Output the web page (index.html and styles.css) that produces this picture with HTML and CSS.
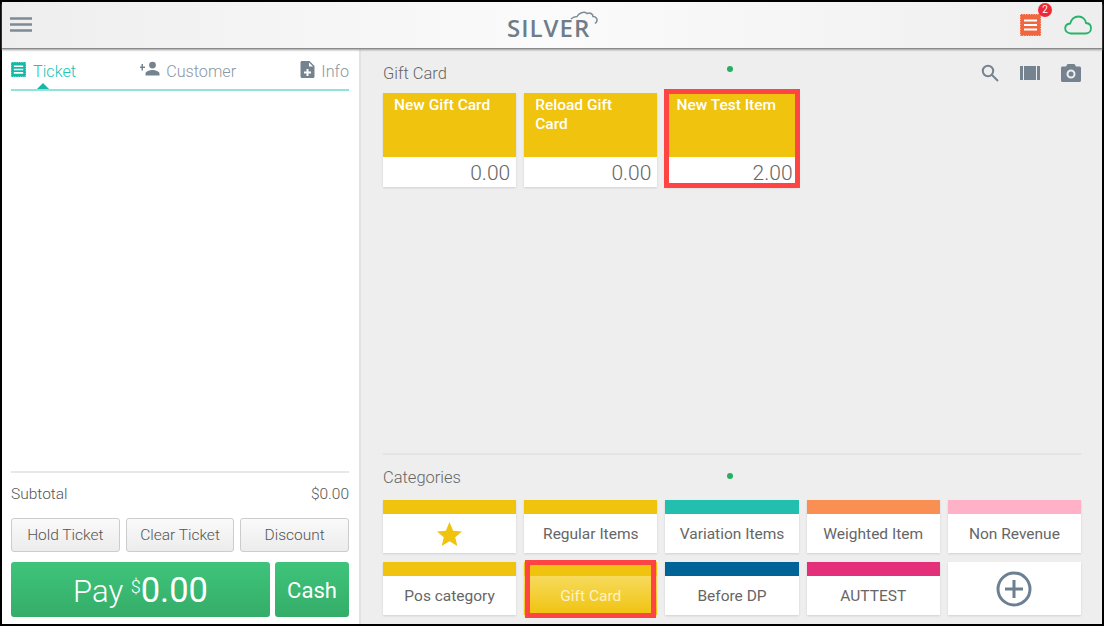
FILE: index.html
```html
<!DOCTYPE html>
<html lang="en">
<head>
    <meta charset="UTF-8">
    <title>Silver POS</title>
    <link rel="stylesheet" href="styles.css">
</head>
<body>
    <div class="screen">
        <header class="topbar">
            <svg class="menu-icon" viewBox="0 0 22 15"><path d="M0 1.500h22M0 7.500h22M0 13.500h22"/></svg>
            <div class="logo">
                <span class="logo-text">SILVER</span>
                <svg class="logo-cloud" viewBox="0 0 28 13"><path d="M1 8 C3 6 5 5.500 7 5.500 C9 2 14 0 17 2.500 C20 1 23 3 23 5.500 C26 5.500 28 8 26.500 11 L25 12.500"/></svg>
            </div>
            <div class="topbar-right">
                <div class="notify">
                    <svg class="ticket-icon" viewBox="0 0 21 22"><path class="orange" d="M0 0h21v22H0z"/><path class="serrate" d="M0 0h21v22H0z"/><path class="white-bar" d="M4 6.500h13M4 11h13M4 15.500h13"/></svg>
                    <span class="badge">2</span>
                </div>
                <svg class="cloud-icon" viewBox="0 0 28 20"><path d="M7 18.500 C3.500 18.500 1.200 16 1.200 13.500 C1.200 10.500 3.500 8.800 6.200 8.500 C7.500 4 11 1.500 14.500 1.500 C18.500 1.500 21.500 4.500 22 8 C25 8.300 27 10.500 27 13.200 C27 16 24.800 18.500 21.500 18.500 Z"/></svg>
            </div>
        </header>

        <div class="main">
            <aside class="ticket-panel">
                <nav class="tabs">
                    <div class="tab tab-active">
                        <svg class="tab-icon" viewBox="0 0 16 16"><path class="teal" d="M0 0h16v16H0z"/><path class="serrate" d="M0 0h16v16H0z"/><path class="white-thin" d="M3 4.500h10M3 8h10M3 11.500h10"/></svg>
                        <span>Ticket</span>
                    </div>
                    <div class="tab">
                        <svg class="tab-icon tab-icon-wide" viewBox="0 0 20 14"><path class="slate" d="M12.500 7a3.400 3.400 0 1 0 0-6.800 3.400 3.400 0 0 0 0 6.800zM12.500 8.600c-2.600 0-7 1.300-7 3.600V14h14v-1.800c0-2.300-4.400-3.600-7-3.600zM3 5V2.500H1.500V5H0v1.500h1.500V9H3V6.500h2V5z"/></svg>
                        <span>Customer</span>
                    </div>
                    <div class="tab">
                        <svg class="tab-icon" viewBox="0 0 14 17"><path class="slate" d="M1.500 0C.7 0 0 .7 0 1.500v14C0 16.300.7 17 1.500 17h11c.8 0 1.500-.7 1.500-1.500V5L9 0zM8.500 1.500 12.500 5.500H8.500zM6 8h2v2.500h2.500v2H8V15H6v-2.500H3.500v-2H6z" fill-rule="evenodd"/></svg>
                        <span>Info</span>
                    </div>
                </nav>
                <div class="ticket-lines"></div>
                <div class="subtotal">
                    <span>Subtotal</span>
                    <span>$0.00</span>
                </div>
                <div class="ticket-actions">
                    <button class="action-btn">Hold Ticket</button>
                    <button class="action-btn">Clear Ticket</button>
                    <button class="action-btn">Discount</button>
                </div>
                <div class="pay-row">
                    <button class="pay-btn">Pay <sup class="pay-currency">$</sup><span class="pay-amount">0.00</span></button>
                    <button class="cash-btn">Cash</button>
                </div>
            </aside>

            <section class="catalog">
                <div class="section-head">
                    <span class="section-title">Gift Card</span>
                    <span class="page-dot"></span>
                    <div class="tools">
                        <svg class="tool tool-search" viewBox="0 0 18 18"><circle cx="7" cy="7" r="5.200"/><path d="M11 11l6 6"/></svg>
                        <svg class="tool" viewBox="0 0 20 16"><path class="slate" d="M0 1h3v14H0zM4 1h12v14H4zM17 1h3v14h-3z"/></svg>
                        <svg class="tool" viewBox="0 0 20 18"><path class="slate" fill-rule="evenodd" d="M6.500 0h7L15 2.500h3.500c.8 0 1.500.7 1.500 1.500v12.500c0 .8-.7 1.500-1.500 1.500h-17C.7 18 0 17.300 0 16.500V4c0-.8.7-1.500 1.500-1.500H5zM10 5.500a4.500 4.500 0 1 0 0 9 4.500 4.500 0 0 0 0-9zM10 7.500a2.500 2.500 0 1 1 0 5 2.500 2.500 0 0 1 0-5z"/></svg>
                    </div>
                </div>
                <div class="tile-grid">
                    <div class="item-tile">
                        <div class="item-name">New Gift Card</div>
                        <div class="item-price">0.00</div>
                    </div>
                    <div class="item-tile">
                        <div class="item-name">Reload Gift Card</div>
                        <div class="item-price">0.00</div>
                    </div>
                    <div class="item-tile highlighted">
                        <div class="item-name">New Test Item</div>
                        <div class="item-price">2.00</div>
                    </div>
                </div>

                <div class="categories">
                    <div class="section-head section-head-cat">
                        <span class="section-title">Categories</span>
                        <span class="page-dot"></span>
                    </div>
                    <div class="cat-grid">
                        <div class="cat-tile yellow">
                            <div class="cat-label"><svg class="star" viewBox="0 0 24 23"><path d="M12 0l3.500 8.300 8.500.7-6.500 5.700 2 8.300-7.500-4.500L4.500 23l2-8.300L0 9l8.500-.7z"/></svg></div>
                        </div>
                        <div class="cat-tile yellow"><div class="cat-label">Regular Items</div></div>
                        <div class="cat-tile teal-band"><div class="cat-label">Variation Items</div></div>
                        <div class="cat-tile orange-band"><div class="cat-label">Weighted Item</div></div>
                        <div class="cat-tile pink"><div class="cat-label">Non Revenue</div></div>
                        <div class="cat-tile yellow"><div class="cat-label">Pos category</div></div>
                        <div class="cat-tile yellow cat-selected highlighted"><div class="cat-label">Gift Card</div></div>
                        <div class="cat-tile blue"><div class="cat-label">Before DP</div></div>
                        <div class="cat-tile magenta"><div class="cat-label">AUTTEST</div></div>
                        <div class="cat-tile cat-add">
                            <svg class="add-icon" viewBox="0 0 36 36"><circle cx="18" cy="18" r="16"/><path d="M18 9v18M9 18h18"/></svg>
                        </div>
                    </div>
                </div>
            </section>
        </div>
    </div>
</body>
</html>
```

FILE: styles.css
```css
* {
    box-sizing: border-box;
}
html, body {
    margin: 0;
    height: 100%;
    overflow: hidden;
}
body {
    font-family: Roboto, Arial, sans-serif;
    background: #000;
}
.screen {
    height: 626px;
    border: 2px solid #000;
    display: flex;
    flex-direction: column;
    background: #eee;
}

/* top bar */
.topbar {
    height: 46px;
    flex: none;
    display: flex;
    align-items: center;
    justify-content: space-between;
    padding: 0 10px 0 8px;
    position: relative;
    z-index: 2;
    background: linear-gradient(90deg, #eeeeee 0%, #fbfbfb 50%, #eeeeee 100%);
    box-shadow: 0 1px 0 #8a8a8a, 0 2px 2px #9a9a9a;
}
.menu-icon {
    width: 22px;
    height: 15px;
    margin-top: -2px;
}
.menu-icon path {
    stroke: #7d8a97;
    stroke-width: 2.500;
    fill: none;
}
.logo {
    position: absolute;
    left: 505px;
    top: 9px;
    width: 92px;
    height: 30px;
}
.logo-text {
    position: absolute;
    left: 0;
    top: 2px;
    font-family: "Open Sans", sans-serif;
    font-size: 24px;
    font-weight: 600;
    line-height: 30px;
    letter-spacing: 1px;
    color: #6f7d88;
}
.logo-cloud {
    position: absolute;
    left: 63px;
    top: 0;
    width: 28px;
    height: 13px;
}
.logo-cloud path {
    fill: none;
    stroke: #7d8a95;
    stroke-width: 1.500;
}
.topbar-right {
    display: flex;
    align-items: center;
    gap: 23px;
}
.notify {
    position: relative;
    width: 21px;
    height: 22px;
}
.ticket-icon {
    display: block;
    width: 21px;
    height: 22px;
}
.orange {
    fill: #f0663f;
}
.serrate {
    fill: none;
    stroke: #fff;
    stroke-width: 1;
    stroke-dasharray: 1 1.500;
}
.white-bar {
    stroke: #fff;
    stroke-width: 2;
}
.badge {
    position: absolute;
    top: -11px;
    right: -11px;
    width: 14px;
    height: 14px;
    border-radius: 50%;
    background: #ee2a37;
    color: #fff;
    font-size: 10px;
    line-height: 14px;
    text-align: center;
}
.cloud-icon {
    width: 28px;
    height: 20px;
}
.cloud-icon path {
    fill: none;
    stroke: #27b36b;
    stroke-width: 1.800;
}

.main {
    flex: 1;
    display: flex;
    min-height: 0;
}

/* ticket panel */
.ticket-panel {
    width: 359px;
    flex: none;
    background: #fff;
    border-right: 2px solid #e2e2e2;
    padding: 0 10px 7px 9px;
    display: flex;
    flex-direction: column;
}
.tabs {
    display: flex;
    justify-content: space-between;
    height: 43px;
    padding-top: 13px;
    border-bottom: 2px solid #8fe3d8;
    position: relative;
    color: #8c97a3;
    font-size: 16.200px;
    font-weight: 300;
}
.tabs::after {
    content: "";
    position: absolute;
    left: 26px;
    bottom: 0;
    border: 6px solid transparent;
    border-top: 0;
    border-bottom-color: #14b8a6;
}
.tab {
    display: flex;
    align-items: flex-start;
    gap: 6px;
    line-height: 21px;
}
.tab-active {
    gap: 7px;
    color: #22c4b3;
}
.tab-icon {
    width: 15px;
    height: 17px;
}
.tab-icon-wide {
    width: 20px;
    height: 15px;
}
.teal {
    fill: #14b8a6;
}
.white-thin {
    stroke: #fff;
    stroke-width: 1.800;
}
.slate {
    fill: #74838f;
}
.ticket-lines {
    flex: 1;
}
.subtotal {
    height: 47px;
    padding-bottom: 3px;
    border-top: 2px solid #e8e8e8;
    display: flex;
    justify-content: space-between;
    align-items: center;
    font-size: 15.500px;
    font-weight: 300;
    color: #555;
}
.ticket-actions {
    display: flex;
    gap: 6px;
    margin-bottom: 10px;
}
.action-btn {
    flex: 1;
    height: 34px;
    padding: 0;
    border: 1px solid #ccc;
    border-radius: 3px;
    background: linear-gradient(#fafafa, #ececec);
    font-family: inherit;
    font-size: 15.500px;
    font-weight: 300;
    color: #555;
}
.pay-row {
    display: flex;
    gap: 5px;
    height: 55px;
}
.pay-btn, .cash-btn {
    border: none;
    border-radius: 3px;
    background: linear-gradient(#3ec47a, #35ad69);
    color: #fff;
    font-family: inherit;
    padding: 0;
}
.pay-btn {
    flex: 1;
    font-size: 31px;
    font-weight: 300;
}
.pay-currency {
    font-size: 18px;
    line-height: 0;
    vertical-align: 9px;
}
.pay-amount {
    font-size: 34.500px;
    font-weight: 400;
}
.cash-btn {
    width: 74px;
    padding-top: 2px;
    font-size: 22px;
    font-weight: 400;
}

/* catalog */
.catalog {
    flex: 1;
    padding: 0 21px 0 22px;
    display: flex;
    flex-direction: column;
    min-width: 0;
}
.section-head {
    height: 45px;
    display: flex;
    align-items: center;
    position: relative;
    padding-top: 5px;
}
.section-title {
    font-size: 16.500px;
    font-weight: 300;
    color: #666;
}
.page-dot {
    position: absolute;
    left: 344px;
    top: 18px;
    width: 6px;
    height: 6px;
    border-radius: 50%;
    background: #27ae60;
}
.tools {
    margin-left: auto;
    display: flex;
    align-items: center;
    gap: 21px;
}
.tool {
    width: 20px;
    height: 18px;
}
.tool-search {
    width: 18px;
}
.tool-search circle, .tool-search path {
    fill: none;
    stroke: #74838f;
    stroke-width: 2;
}
.tile-grid, .cat-grid {
    display: grid;
    grid-template-columns: repeat(5, 1fr);
    gap: 8px;
}
.item-tile {
    height: 94px;
    position: relative;
    background: #fff;
    box-shadow: 0 1px 2px rgba(0, 0, 0, 0.12);
    display: flex;
    flex-direction: column;
}
.item-name {
    flex: none;
    height: 64px;
    padding: 3px 14px 3px 11px;
    background: #f0c30f;
    color: #fff;
    font-size: 15.500px;
    font-weight: 500;
    line-height: 19px;
}
.item-price {
    flex: 1;
    padding: 2px 6px 0 0;
    text-align: right;
    font-size: 21px;
    font-weight: 300;
    line-height: 28px;
    color: #666;
}
.highlighted::after {
    content: "";
    position: absolute;
    border: 5px solid #ff4444;
    pointer-events: none;
}
.item-tile.highlighted::after {
    left: -1px;
    right: -1px;
    top: -4px;
    bottom: -1px;
}
.categories {
    margin-top: auto;
    border-top: 2px solid #e4e4e4;
    padding-bottom: 9px;
}
.section-head-cat {
    padding: 2px 0;
}
.cat-tile {
    height: 53px;
    position: relative;
    background: #fff;
    border-top: 14px solid #f0c30f;
    box-shadow: 0 1px 2px rgba(0, 0, 0, 0.12);
}
.cat-grid {
    gap: 9px 8px;
}
.cat-label {
    height: 100%;
    display: flex;
    align-items: center;
    justify-content: center;
    font-size: 15.500px;
    color: #666;
}
.yellow { border-top-color: #f0c30f; }
.teal-band { border-top-color: #22bfae; }
.orange-band { border-top-color: #f98f52; }
.pink { border-top-color: #ffb1c8; }
.blue { border-top-color: #006398; }
.magenta { border-top-color: #e4307a; }
.star {
    width: 25px;
    height: 24px;
}
.star path {
    fill: #f0c30f;
}
.cat-selected {
    background: linear-gradient(#f7da5c, #f0c30f);
}
.cat-selected .cat-label {
    color: #fdf3c4;
}
.cat-tile.highlighted::after {
    left: 1px;
    right: 1px;
    top: -16px;
    bottom: -3px;
}
.cat-add {
    border-top: none;
    display: flex;
    align-items: center;
    justify-content: center;
}
.add-icon {
    width: 36px;
    height: 36px;
}
.add-icon circle, .add-icon path {
    fill: none;
    stroke: #6d8091;
    stroke-width: 3;
}
```
